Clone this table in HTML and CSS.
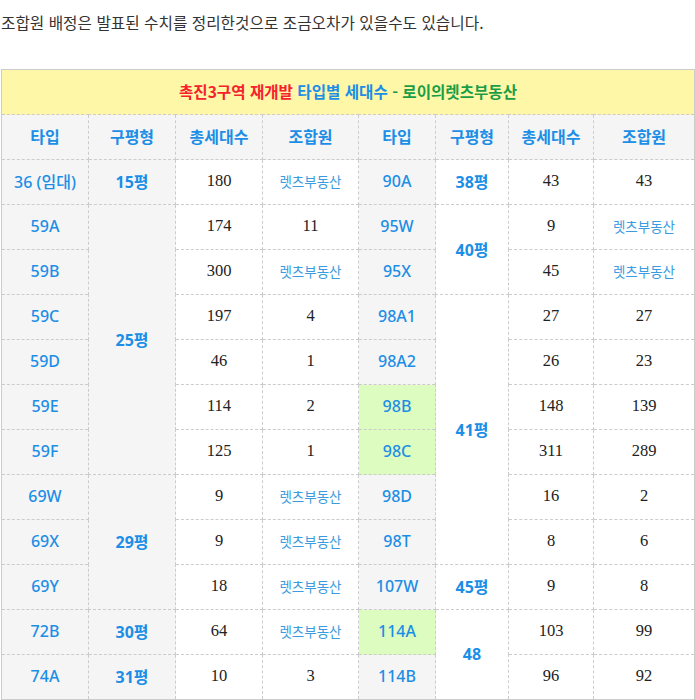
FILE: index.html
```html
<!DOCTYPE html>
<html lang="ko">
<head>
<meta charset="utf-8">
<link rel="stylesheet" href="styles.css">
</head>
<body>
<p class="note">조합원 배정은 발표된 수치를 정리한것으로 조금오차가 있을수도 있습니다.</p>
<table class="tbl">
<colgroup>
<col style="width:87px"><col style="width:87px"><col style="width:87px"><col style="width:96px">
<col style="width:77px"><col style="width:73px"><col style="width:85px"><col style="width:101px">
</colgroup>
<tr><td class="title" colspan="8"><span class="red">촉진3구역 재개발</span> <span class="blue">타입별 세대수</span> <span class="green">- 로이의렛츠부동산</span></td></tr>
<tr class="head"><th>타입</th><th>구평형</th><th>총세대수</th><th>조합원</th><th>타입</th><th>구평형</th><th>총세대수</th><th>조합원</th></tr>
<tr><td class="type">36 (임대)</td><td class="py g">15평</td><td class="num">180</td><td class="lets">렛츠부동산</td><td class="type">90A</td><td class="py">38평</td><td class="num">43</td><td class="num">43</td></tr>
<tr><td class="type">59A</td><td class="py g" rowspan="6">25평</td><td class="num">174</td><td class="num">11</td><td class="type">95W</td><td class="py" rowspan="2">40평</td><td class="num">9</td><td class="lets">렛츠부동산</td></tr>
<tr><td class="type">59B</td><td class="num">300</td><td class="lets">렛츠부동산</td><td class="type">95X</td><td class="num">45</td><td class="lets">렛츠부동산</td></tr>
<tr><td class="type">59C</td><td class="num">197</td><td class="num">4</td><td class="type">98A1</td><td class="py" rowspan="6">41평</td><td class="num">27</td><td class="num">27</td></tr>
<tr><td class="type">59D</td><td class="num">46</td><td class="num">1</td><td class="type">98A2</td><td class="num">26</td><td class="num">23</td></tr>
<tr><td class="type">59E</td><td class="num">114</td><td class="num">2</td><td class="type hl">98B</td><td class="num">148</td><td class="num">139</td></tr>
<tr><td class="type">59F</td><td class="num">125</td><td class="num">1</td><td class="type hl">98C</td><td class="num">311</td><td class="num">289</td></tr>
<tr><td class="type">69W</td><td class="py g" rowspan="3">29평</td><td class="num">9</td><td class="lets">렛츠부동산</td><td class="type">98D</td><td class="num">16</td><td class="num">2</td></tr>
<tr><td class="type">69X</td><td class="num">9</td><td class="lets">렛츠부동산</td><td class="type">98T</td><td class="num">8</td><td class="num">6</td></tr>
<tr><td class="type">69Y</td><td class="num">18</td><td class="lets">렛츠부동산</td><td class="type">107W</td><td class="py">45평</td><td class="num">9</td><td class="num">8</td></tr>
<tr><td class="type">72B</td><td class="py g">30평</td><td class="num">64</td><td class="lets">렛츠부동산</td><td class="type hl">114A</td><td class="py" rowspan="2">48</td><td class="num">103</td><td class="num">99</td></tr>
<tr><td class="type">74A</td><td class="py g">31평</td><td class="num">10</td><td class="num">3</td><td class="type">114B</td><td class="num">96</td><td class="num">92</td></tr>
</table>
</body>
</html>
```
FILE: styles.css
```css
html, body {
  margin: 0;
  padding: 0;
  background: #fff;
}
body {
  font-family: "Noto Sans CJK KR", "Noto Sans", sans-serif;
  color: #333;
}
.note {
  margin: 12px 0 0 1px;
  font-size: 15.7px;
  line-height: 22px;
  color: #333;
}
.tbl {
  margin: 35px 0 0 1px;
  width: 693px;
  table-layout: fixed;
  border-collapse: collapse;
  border: 1px solid #ccc;
}
.tbl td, .tbl th {
  border: 1px dashed #ccc;
  height: 42px;
  padding: 0 0 2px;
  text-align: center;
  vertical-align: middle;
}
.tbl .title {
  background: #fff7a8;
  font-weight: 700;
  font-size: 15.6px;
  border-left: 1px solid #ccc;
  border-right: 1px solid #ccc;
  border-top: 1px solid #ccc;
  height: 41px;
  padding-bottom: 3px;
}
.red { color: #f5222d; }
.blue { color: #1c8ee6; }
.green { color: #1a9e45; }
.head th {
  background: #f5f5f5;
  color: #1c8ee6;
  font-weight: 700;
  font-size: 16px;
}
.type {
  background: #f5f5f5;
  color: #1c8ee6;
  font-family: "Noto Sans", "Noto Sans CJK KR", sans-serif;
  font-weight: 500;
  font-size: 16px;
}
.type.hl {
  background: #ddfcc0;
}
.py {
  color: #1c8ee6;
  font-family: "Noto Sans", "Noto Sans CJK KR", sans-serif;
  font-weight: 700;
  font-size: 16px;
}
.py.g {
  background: #f5f5f5;
}
.num {
  font-family: "Liberation Serif", "Noto Sans CJK KR", serif;
  font-size: 16.5px;
  color: #222;
}
.lets {
  color: #3b9be0;
  font-size: 13.5px;
}
```
